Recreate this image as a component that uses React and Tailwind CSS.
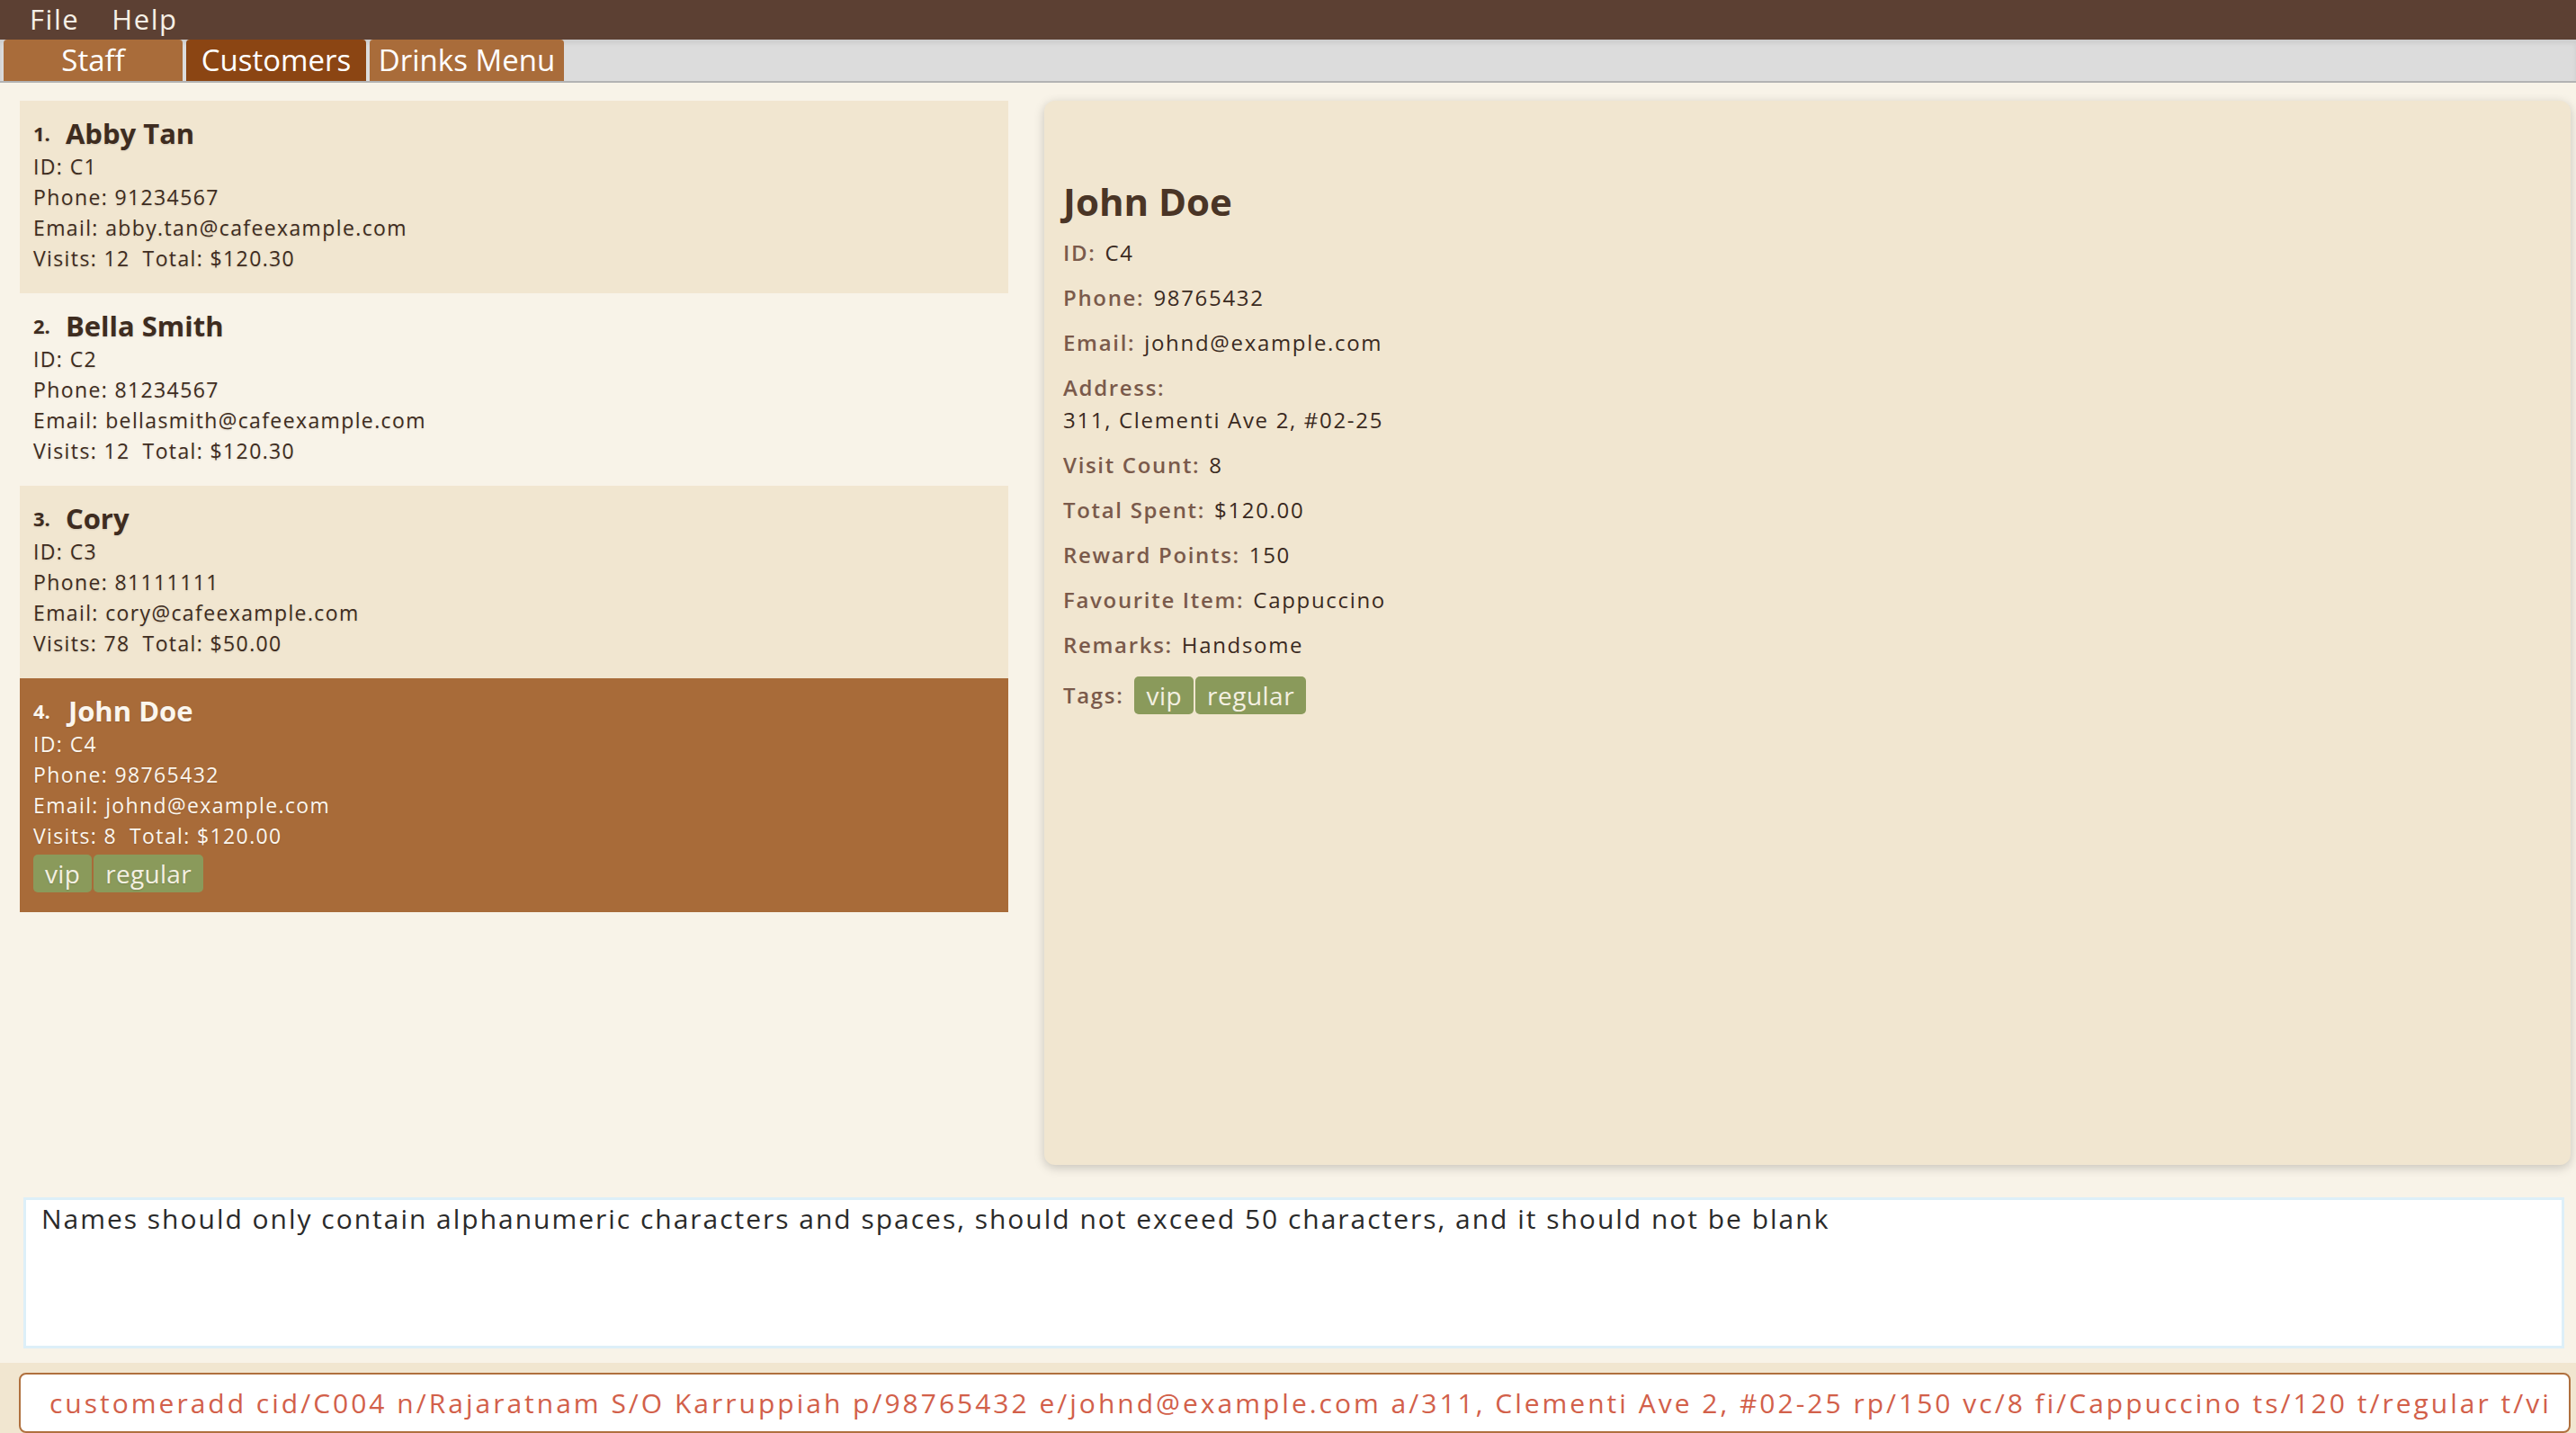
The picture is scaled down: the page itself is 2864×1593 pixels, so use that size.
import React from "react";

const customers = [
  { id: "C1", name: "Abby Tan", phone: "91234567", email: "abby.tan@cafeexample.com", visits: 12, total: "$120.30", tags: [] },
  { id: "C2", name: "Bella Smith", phone: "81234567", email: "bellasmith@cafeexample.com", visits: 12, total: "$120.30", tags: [] },
  { id: "C3", name: "Cory", phone: "81111111", email: "cory@cafeexample.com", visits: 78, total: "$50.00", tags: [] },
  { id: "C4", name: "John Doe", phone: "98765432", email: "johnd@example.com", visits: 8, total: "$120.00", tags: ["vip", "regular"] },
];

const Chip = ({ label }) => (
  <span className="h-[42px] px-[13px] flex items-center rounded-[5px] bg-[#8a9a5b] text-[#f4f0e2] text-[28px] leading-none">
    {label}
  </span>
);

const CustomerCard = ({ index, customer, selected }) => {
  const bg = selected
    ? "bg-[#a86b39] text-[#fbf6ee]"
    : index % 2 === 0
    ? "bg-[#f1e6d0] text-[#3e2c20]"
    : "text-[#3e2c20]";

  return (
    <div className={`pl-[15px] pt-[16px] pb-[22px] ${bg} [text-shadow:0_1px_2px_rgba(0,0,0,0.12)]`}>
      <div className={`flex items-center h-[40px] ${selected ? "gap-[20px]" : "gap-[17px]"}`}>
        <span className="text-[22px] font-bold">{index + 1}.</span>
        <span className="text-[31px] font-bold">{customer.name}</span>
      </div>
      <div className="text-[23px] leading-[34px] tracking-[0.06em]">
        <div>ID: {customer.id}</div>
        <div>Phone: {customer.phone}</div>
        <div>Email: {customer.email}</div>
        <div>
          Visits: {customer.visits}
          <span className="ml-[14px]">Total: {customer.total}</span>
        </div>
      </div>
      {customer.tags.length > 0 && (
        <div className="flex gap-[2px] mt-[4px] tracking-[0.02em]">
          {customer.tags.map((t) => (
            <Chip key={t} label={t} />
          ))}
        </div>
      )}
    </div>
  );
};

const Field = ({ label, value }) => (
  <div className="h-[34px] leading-[34px] flex gap-[10px]">
    <span className="font-semibold text-[#7a5a4b]">{label}</span>
    <span className="text-[#3a2a1f]">{value}</span>
  </div>
);

export default function App() {
  const selected = customers[3];

  return (
    <div className="w-[2864px] h-[1593px] flex flex-col overflow-hidden bg-[#f8f3e8] font-['Open_Sans',sans-serif]">
      {/* menu bar */}
      <div className="h-[44px] bg-[#5c4033] flex items-center pl-[33px] pb-[3px] gap-[36px] text-[31px] leading-[38px] tracking-[0.05em] text-[#f6f0e6]">
        <span>File</span>
        <span>Help</span>
      </div>

      {/* tabs */}
      <div className="h-[48px] bg-[#dcdcdc] border-b-2 border-[#b3b3b3] flex items-end pl-[4px] gap-[4px] shadow-[inset_0_4px_5px_rgba(0,0,0,0.07)]">
        <div className="w-[199px] h-[46px] rounded-t-[4px] bg-[#a96c3a] text-white text-[33px] flex items-center justify-center">
          Staff
        </div>
        <div className="w-[200px] h-[46px] rounded-t-[4px] bg-[#8b4513] text-white text-[33px] flex items-center justify-center">
          Customers
        </div>
        <div className="w-[216px] h-[46px] rounded-t-[4px] bg-[#a96c3a] text-white text-[33px] flex items-center justify-center">
          Drinks Menu
        </div>
      </div>

      {/* list + details */}
      <div className="h-[1203px] flex pt-[20px] pl-[22px] pr-[6px] gap-[40px]">
        <div className="w-[1099px] flex flex-col">
          {customers.map((c, i) => (
            <CustomerCard key={c.id} index={i} customer={c} selected={i === 3} />
          ))}
        </div>

        <div className="flex-1 rounded-[12px] bg-[#f1e6d0] shadow-[0_3px_12px_rgba(0,0,0,0.2)] pl-[21px] pt-[88px]">
          <div className="text-[42px] leading-[48px] font-bold text-[#4a3526]">{selected.name}</div>
          <div className="mt-[16px] flex flex-col gap-[16px] text-[24px] tracking-[0.07em]">
            <Field label="ID:" value="C4" />
            <Field label="Phone:" value="98765432" />
            <Field label="Email:" value="johnd@example.com" />
            <div className="flex flex-col gap-[2px]">
              <div className="h-[34px] leading-[34px] font-semibold text-[#7a5a4b]">Address:</div>
              <div className="h-[34px] leading-[34px] text-[#3a2a1f]">311, Clementi Ave 2, #02-25</div>
            </div>
            <Field label="Visit Count:" value="8" />
            <Field label="Total Spent:" value="$120.00" />
            <Field label="Reward Points:" value="150" />
            <Field label="Favourite Item:" value="Cappuccino" />
            <Field label="Remarks:" value="Handsome" />
            <div className="mt-[2px] flex items-center gap-[12px]">
              <span className="font-semibold text-[#7a5a4b]">Tags:</span>
              <div className="flex gap-[2px] tracking-[0.02em]">
                {selected.tags.map((t) => (
                  <Chip key={t} label={t} />
                ))}
              </div>
            </div>
          </div>
        </div>
      </div>

      {/* result display */}
      <div className="pt-[36px] pb-[16px] pl-[26px] pr-[13px]">
        <div className="h-[168px] bg-white border-[3px] border-[#ddeff8] pl-[17px] pt-[1px] text-[30px] leading-[40px] tracking-[0.066em] text-[#2a2a2a] whitespace-nowrap overflow-hidden">
          Names should only contain alphanumeric characters and spaces, should not exceed 50 characters, and it should not be blank
        </div>
      </div>

      {/* command box */}
      <div className="h-[78px] bg-[#f1e6d0] pt-[11px] pl-[21px] pr-[6px]">
        <div className="h-[67px] bg-white border-2 border-[#b0703e] rounded-[8px] flex items-center pl-[32px] pr-[20px] overflow-hidden">
          <span className="whitespace-nowrap overflow-hidden text-[30px] leading-[40px] tracking-[0.1em] text-[#d2604a]">
            customeradd cid/C004 n/Rajaratnam S/O Karruppiah p/98765432 e/johnd@example.com a/311, Clementi Ave 2, #02-25 rp/150 vc/8 fi/Cappuccino ts/120 t/regular t/vip
          </span>
        </div>
      </div>
    </div>
  );
}
